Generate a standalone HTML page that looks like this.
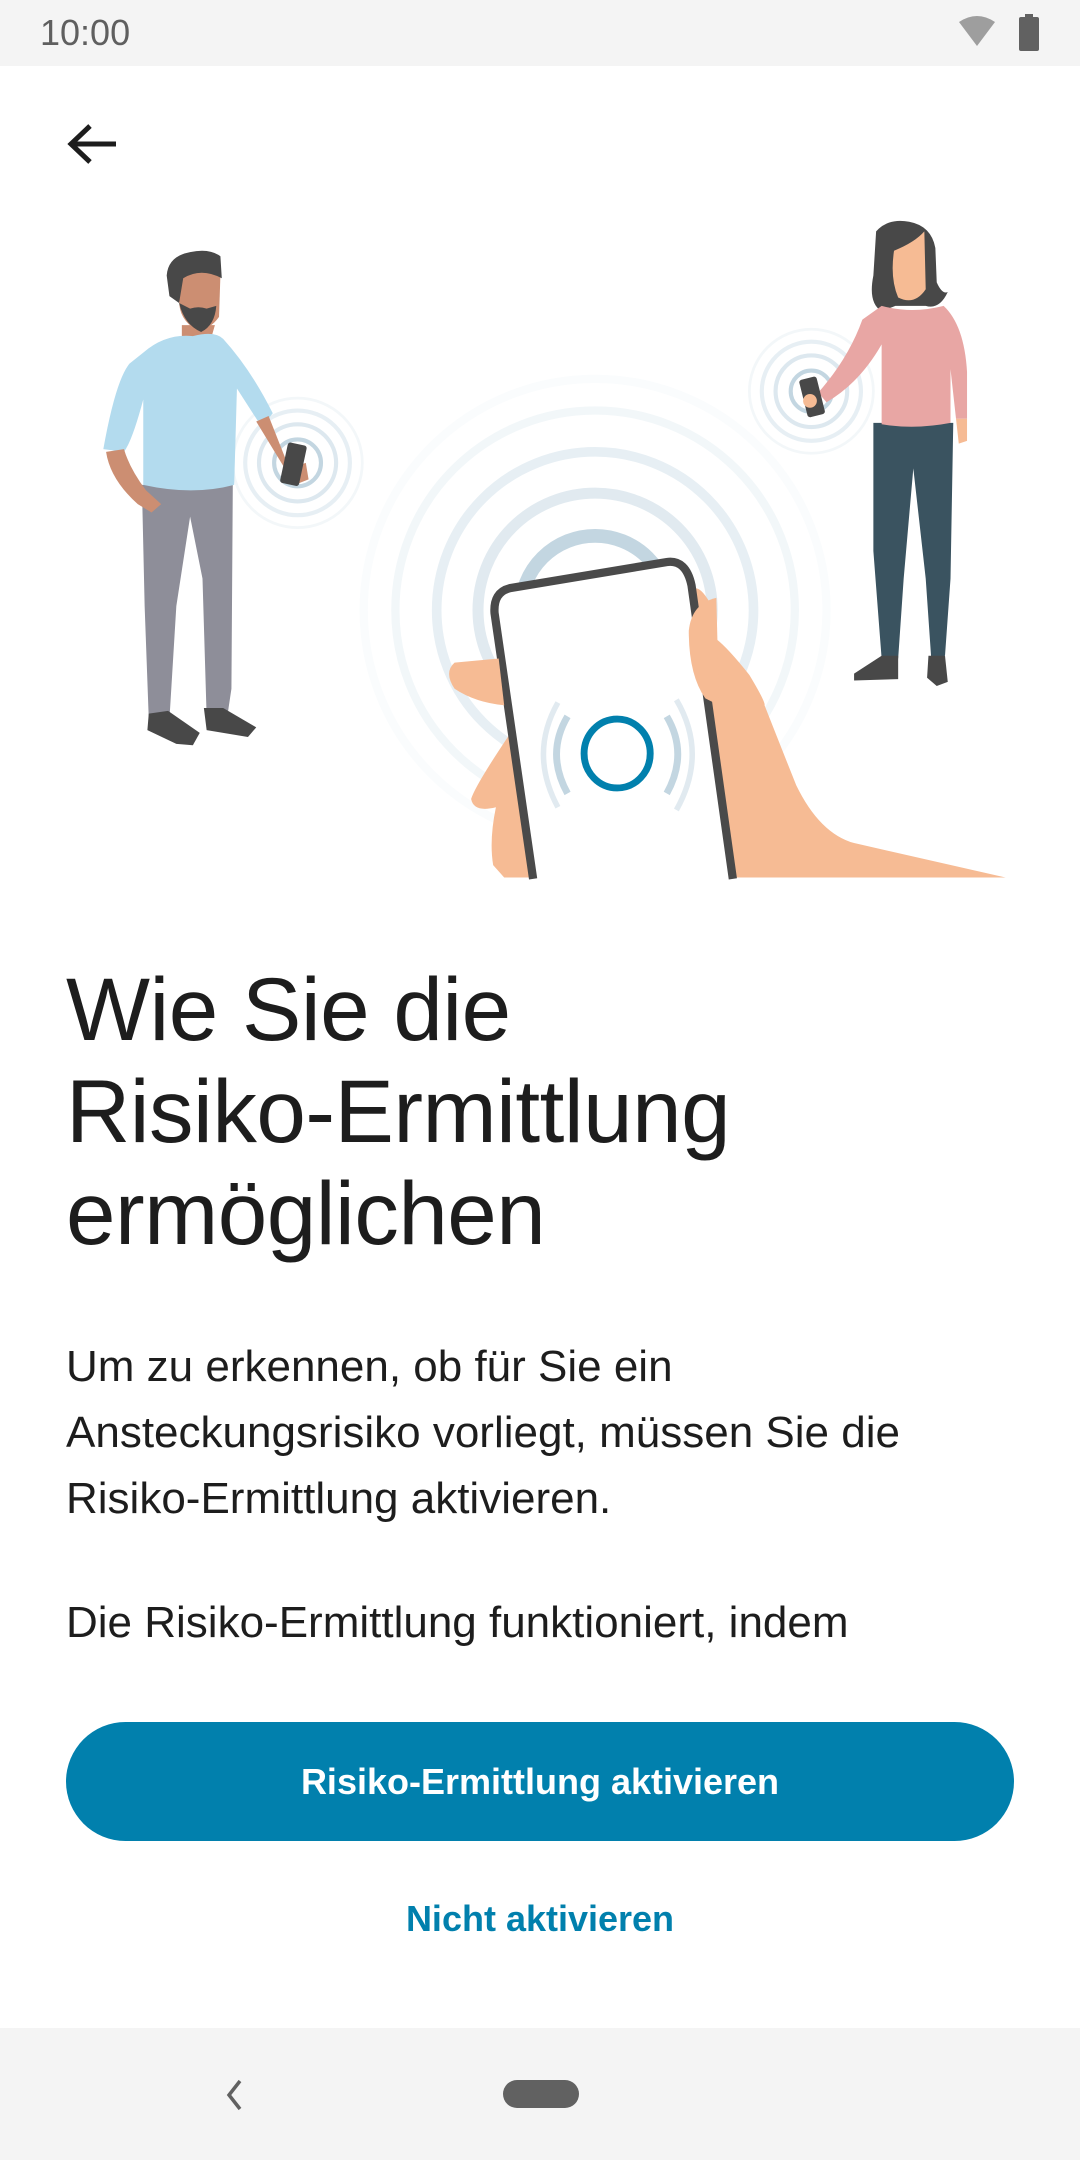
<!DOCTYPE html>
<html><head><meta charset="utf-8"><style>
html,body{margin:0;padding:0;}
body{width:1080px;height:2160px;position:relative;background:#fff;overflow:hidden;font-family:"Liberation Sans",sans-serif;}
.sb{position:absolute;left:0;top:0;width:1080px;height:66px;background:#f4f4f4;}
.time{position:absolute;left:40px;top:12px;font-size:36px;color:#5f5f5f;}
.title{position:absolute;left:66px;top:958px;font-size:89px;line-height:102px;color:#1d1d1d;letter-spacing:-0.5px;}
.body{position:absolute;left:66px;font-size:44px;line-height:66px;color:#1d1d1d;}
.btn{position:absolute;left:66px;top:1722px;width:948px;height:119px;border-radius:60px;background:#0180ad;color:#fff;font-weight:bold;font-size:36px;text-align:center;line-height:119px;}
.link{position:absolute;left:0;width:1080px;top:1893px;text-align:center;color:#0180ad;font-weight:bold;font-size:36px;line-height:52px;}
.nav{position:absolute;left:0;top:2028px;width:1080px;height:132px;background:#f4f4f4;}
</style></head><body>
<div class="sb"><div class="time">10:00</div>
<svg style="position:absolute;left:955px;top:14px" width="110" height="40" viewBox="0 0 110 40">
<path d="M4 8 Q22 -4 40 8 L22 32 Z" fill="#9e9e9e"/>
<rect x="64" y="3" width="20" height="34" rx="2" fill="#616161"/><rect x="70" y="0" width="8" height="4" fill="#616161"/>
</svg></div>
<svg style="position:absolute;left:66px;top:122px" width="54" height="44" viewBox="0 0 54 44"><path d="M50 22H6M24 4L5 22L24 40" fill="none" stroke="#1d1d1d" stroke-width="5"/></svg>

<svg style="position:absolute;left:0;top:0" width="1080" height="2160" viewBox="0 0 784 1568">
<g fill="none">
<circle cx="432" cy="443" r="168" stroke="#fafcfd" stroke-width="6"/>
<circle cx="432" cy="443" r="145" stroke="#f2f7f9" stroke-width="6"/>
<circle cx="432" cy="443" r="115" stroke="#e7eff4" stroke-width="7"/>
<circle cx="432" cy="443" r="85" stroke="#e1eaf0" stroke-width="8"/>
<circle cx="432" cy="443" r="54" stroke="#c3d6e1" stroke-width="10"/>
</g>
<g fill="none">
<circle cx="216" cy="336" r="47" stroke="#f3f7f9" stroke-width="2"/>
<circle cx="216" cy="336" r="38" stroke="#e7eff4" stroke-width="3"/>
<circle cx="216" cy="336" r="28" stroke="#dde8ef" stroke-width="3"/>
<circle cx="216" cy="336" r="17" stroke="#c3d6e1" stroke-width="3"/>
</g>
<g fill="none">
<circle cx="589" cy="284" r="45" stroke="#f3f7f9" stroke-width="2"/>
<circle cx="589" cy="284" r="36" stroke="#e7eff4" stroke-width="3"/>
<circle cx="589" cy="284" r="26" stroke="#dde8ef" stroke-width="3"/>
<circle cx="589" cy="284" r="15" stroke="#c3d6e1" stroke-width="3"/>
</g>
<!-- man -->
<path d="M103 352 L169 352 L168 500 L165 520 L150 520 L147 420 L138 375 L128 440 L123 522 L108 522 L105 440 Z" fill="#8e8e99"/>
<path d="M108 518 L122 516 L145 532 L140 541 L128 540 L107 530 Z" fill="#484848"/>
<path d="M148 514 L162 514 L186 528 L180 535 L150 530 Z" fill="#484848"/>
<path d="M132 236 L156 236 L152 250 L132 250 Z" fill="#cc8e72"/>
<path d="M104 256 Q120 242 140 244 Q156 240 162 246 Q182 268 198 300 L190 310 L172 282 L170 352 Q140 360 104 352 L104 290 Q96 320 90 328 L75 326 Q84 276 94 264 Z" fill="#b3dbee"/>
<path d="M77 328 Q80 348 100 366 L110 372 L117 366 L106 356 Q94 340 90 326 Z" fill="#cc8e72"/>
<path d="M186 306 L195 302 L210 340 L222 336 L224 348 L214 352 Z" fill="#cc8e72"/>
<rect x="206" y="322" width="14" height="30" rx="2" transform="rotate(12 213 337)" fill="#484848"/>
<path d="M131 200 Q146 192 160 200 L159 230 Q152 240 142 239 Q130 232 130 218 Z" fill="#cc8e72"/>
<path d="M130 220 Q134 236 146 241 Q156 236 157 222 L150 224 Q144 222 138 224 Z" fill="#484848"/>
<path d="M121 200 Q122 186 138 183 Q152 180 160 186 L161 202 Q146 194 133 202 L130 220 L123 215 Z" fill="#484848"/>
<!-- woman -->
<path d="M634 307 L692 307 L690 420 L686 476 L676 478 L672 420 L663 340 L656 420 L652 478 L640 478 L634 400 Z" fill="#3a5360"/>
<path d="M640 476 L652 476 L652 493 L620 494 L620 489 Z" fill="#484848"/>
<path d="M674 476 L686 476 L688 495 L680 498 L673 492 Z" fill="#484848"/>
<path d="M636 168 Q645 158 660 161 Q676 164 679 180 L680 205 Q684 214 688 212 Q682 225 672 222 L650 222 L640 226 Q630 220 634 200 Z" fill="#484848"/>
<path d="M649 182 Q664 176 671 168 L672 210 Q664 222 652 216 Q646 202 649 182 Z" fill="#f6bb94"/>
<path d="M640 222 Q662 228 685 222 Q700 236 702 270 L702 304 L694 304 L690 268 L690 307 Q664 312 640 308 L640 250 Q624 278 600 292 L594 285 Q616 260 626 232 Z" fill="#e8a6a4"/>
<path d="M694 304 L702 304 L702 320 L696 322 Z" fill="#f6bb94"/>
<rect x="583" y="274" width="13" height="28" rx="2" transform="rotate(-14 590 288)" fill="#484848"/>
<circle cx="588" cy="291" r="5" fill="#f6bb94"/>
<!-- hand back -->
<path d="M500 432 Q505 420 515 437 L520 464 Q528 470 544 490 Q556 510 555 512 Q566 540 578 570 Q595 605 620 612 L730 637 L520 637 Z" fill="#f6bb94"/>
<path d="M372 530 Q345 570 342 580 Q344 590 360 586 Q355 610 358 628 L366 637 L400 637 L395 530 Z" fill="#f6bb94"/>
<!-- phone -->
<path d="M370 427 L484 408 Q498 406 502 425 L532 638 L387 638 L359 445 Q358 430 370 427 Z" fill="#fff"/>
<path d="M387 638 L359 445 Q358 430 370 427 L484 408 Q498 406 502 425 L532 638" fill="none" stroke="#4a4a4a" stroke-width="6"/>
<path d="M362 478 L330 481 Q322 488 330 500 Q345 510 366 512 Z" fill="#f6bb94"/>
<path d="M520 434 Q502 438 500 458 Q500 490 512 507 L522 512 Z" fill="#f6bb94"/>
<ellipse cx="448" cy="547" rx="24" ry="25" fill="none" stroke="#0180ad" stroke-width="5"/>
<path d="M412 520 Q396 547 412 576" fill="none" stroke="#c3d6e1" stroke-width="5"/>
<path d="M484 520 Q500 547 484 576" fill="none" stroke="#c3d6e1" stroke-width="5"/>
<path d="M405 510 Q384 547 405 586" fill="none" stroke="#e1eaf0" stroke-width="4"/>
<path d="M491 508 Q514 547 491 588" fill="none" stroke="#e1eaf0" stroke-width="4"/>
</svg>

<div class="title">Wie Sie die<br>Risiko-Ermittlung<br>ermöglichen</div>
<div class="body" style="top:1334px">Um zu erkennen, ob für Sie ein<br>Ansteckungsrisiko vorliegt, müssen Sie die<br>Risiko-Ermittlung aktivieren.</div>
<div class="body" style="top:1590px">Die Risiko-Ermittlung funktioniert, indem</div>
<div class="btn">Risiko-Ermittlung aktivieren</div>
<div class="link">Nicht aktivieren</div>
<div class="nav">
<svg style="position:absolute;left:222px;top:50px" width="24" height="34" viewBox="0 0 24 34"><path d="M18 3L7 17L18 31" fill="none" stroke="#616161" stroke-width="3.5"/></svg>
<div style="position:absolute;left:503px;top:52px;width:76px;height:28px;border-radius:14px;background:#616161"></div>
</div>
</body></html>
